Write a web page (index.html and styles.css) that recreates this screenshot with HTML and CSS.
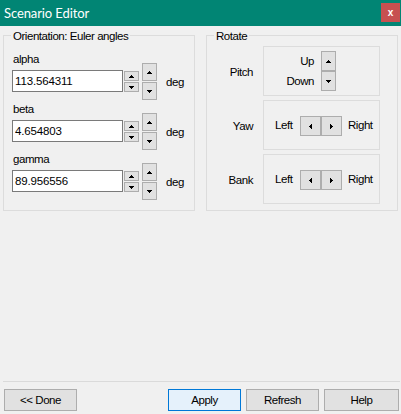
FILE: index.html
```html
<!DOCTYPE html>
<html>
<head>
<meta charset="utf-8">
<link rel="stylesheet" href="styles.css">
</head>
<body>
<div class="window">
  <div class="titlebar">
    <span class="title">Scenario Editor</span>
    <span class="close">x</span>
  </div>
  <div class="main">
    <div class="group">
      <span class="legend">Orientation: Euler angles</span>
      <div class="angle-row">
        <div class="field"><span class="field-label">alpha</span><input class="num" value="113.564311"></div>
        <div class="spin spin-small">
          <div class="sb"><svg width="5" height="3" shape-rendering="crispEdges"><path d="M2 0h1v1H2zM1 1h3v1H1zM0 2h5v1H0z"/></svg></div>
          <div class="sb"><svg width="5" height="3" shape-rendering="crispEdges"><path d="M0 0h5v1H0zM1 1h3v1H1zM2 2h1v1H2z"/></svg></div>
        </div>
        <div class="spin spin-large">
          <div class="sb"><svg width="5" height="3" shape-rendering="crispEdges"><path d="M2 0h1v1H2zM1 1h3v1H1zM0 2h5v1H0z"/></svg></div>
          <div class="sb"><svg width="5" height="3" shape-rendering="crispEdges"><path d="M0 0h5v1H0zM1 1h3v1H1zM2 2h1v1H2z"/></svg></div>
        </div>
        <span class="unit">deg</span>
      </div>
      <div class="angle-row">
        <div class="field"><span class="field-label">beta</span><input class="num" value="4.654803"></div>
        <div class="spin spin-small">
          <div class="sb"><svg width="5" height="3" shape-rendering="crispEdges"><path d="M2 0h1v1H2zM1 1h3v1H1zM0 2h5v1H0z"/></svg></div>
          <div class="sb"><svg width="5" height="3" shape-rendering="crispEdges"><path d="M0 0h5v1H0zM1 1h3v1H1zM2 2h1v1H2z"/></svg></div>
        </div>
        <div class="spin spin-large">
          <div class="sb"><svg width="5" height="3" shape-rendering="crispEdges"><path d="M2 0h1v1H2zM1 1h3v1H1zM0 2h5v1H0z"/></svg></div>
          <div class="sb"><svg width="5" height="3" shape-rendering="crispEdges"><path d="M0 0h5v1H0zM1 1h3v1H1zM2 2h1v1H2z"/></svg></div>
        </div>
        <span class="unit">deg</span>
      </div>
      <div class="angle-row">
        <div class="field"><span class="field-label">gamma</span><input class="num" value="89.956556"></div>
        <div class="spin spin-small">
          <div class="sb"><svg width="5" height="3" shape-rendering="crispEdges"><path d="M2 0h1v1H2zM1 1h3v1H1zM0 2h5v1H0z"/></svg></div>
          <div class="sb"><svg width="5" height="3" shape-rendering="crispEdges"><path d="M0 0h5v1H0zM1 1h3v1H1zM2 2h1v1H2z"/></svg></div>
        </div>
        <div class="spin spin-large">
          <div class="sb"><svg width="5" height="3" shape-rendering="crispEdges"><path d="M2 0h1v1H2zM1 1h3v1H1zM0 2h5v1H0z"/></svg></div>
          <div class="sb"><svg width="5" height="3" shape-rendering="crispEdges"><path d="M0 0h5v1H0zM1 1h3v1H1zM2 2h1v1H2z"/></svg></div>
        </div>
        <span class="unit">deg</span>
      </div>
    </div>

    <div class="group group-rotate">
      <span class="legend">Rotate</span>
      <div class="rot-row">
        <span class="rot-label">Pitch</span>
        <div class="rot-box pitch-box">
          <div class="ud-labels"><span>Up</span><span>Down</span></div>
          <div class="ud-spin">
            <div class="sb"><svg width="5" height="3" shape-rendering="crispEdges"><path d="M2 0h1v1H2zM1 1h3v1H1zM0 2h5v1H0z"/></svg></div>
            <div class="sb"><svg width="5" height="3" shape-rendering="crispEdges"><path d="M0 0h5v1H0zM1 1h3v1H1zM2 2h1v1H2z"/></svg></div>
          </div>
        </div>
      </div>
      <div class="rot-row">
        <span class="rot-label">Yaw</span>
        <div class="rot-box lr-box">
          <span class="lr-left">Left</span>
          <div class="sb lr-btn"><svg width="3" height="5" shape-rendering="crispEdges"><path d="M2 0h1v5H2zM1 1h1v3H1zM0 2h1v1H0z"/></svg></div>
          <div class="sb lr-btn"><svg width="3" height="5" shape-rendering="crispEdges"><path d="M0 0h1v5H0zM1 1h1v3H1zM2 2h1v1H2z"/></svg></div>
          <span class="lr-right">Right</span>
        </div>
      </div>
      <div class="rot-row">
        <span class="rot-label">Bank</span>
        <div class="rot-box lr-box">
          <span class="lr-left">Left</span>
          <div class="sb lr-btn"><svg width="3" height="5" shape-rendering="crispEdges"><path d="M2 0h1v5H2zM1 1h1v3H1zM0 2h1v1H0z"/></svg></div>
          <div class="sb lr-btn"><svg width="3" height="5" shape-rendering="crispEdges"><path d="M0 0h1v5H0zM1 1h1v3H1zM2 2h1v1H2z"/></svg></div>
          <span class="lr-right">Right</span>
        </div>
      </div>
    </div>
  </div>
  <div class="footer">
    <div class="btn">&lt;&lt; Done</div>
    <div class="btn btn-default">Apply</div>
    <div class="btn">Refresh</div>
    <div class="btn btn-help">Help</div>
  </div>
</div>
</body>
</html>
```

FILE: styles.css
```css
* { box-sizing: border-box; }

body {
  margin: 0;
  width: 401px;
  height: 414px;
  overflow: hidden;
  background: #f0f0f0;
  color: #000;
  font-family: "Liberation Sans", Arial, sans-serif;
  font-size: 11.5px;
  letter-spacing: -0.45px;
  line-height: 14px;
}

.window {
  display: flex;
  flex-direction: column;
  height: 414px;
}

.titlebar {
  flex: none;
  height: 26px;
  background: #018574;
  display: flex;
  justify-content: space-between;
  align-items: flex-start;
}

.title {
  font-family: Lato, "Open Sans", sans-serif;
  font-size: 13px;
  letter-spacing: -0.1px;
  color: #fff;
  line-height: 26px;
  padding-left: 4px;
}

.close {
  width: 19px;
  height: 19px;
  margin-top: 3px;
  margin-right: 1px;
  background: #c75050;
  color: #fff;
  font-family: "Liberation Sans", Arial, sans-serif;
  font-weight: bold;
  font-size: 10px;
  letter-spacing: 0;
  display: flex;
  align-items: center;
  justify-content: center;
}

.main {
  flex: 1;
  display: flex;
  gap: 11px;
  padding: 9px 0 0 3px;
}

.group {
  position: relative;
  width: 192px;
  height: 176px;
  border: 1px solid #dcdcdc;
  padding: 16px 0 0 8px;
}

.legend {
  position: absolute;
  top: -7px;
  left: 7px;
  padding: 0 2px;
  background: #f0f0f0;
  line-height: 15px;
}

.angle-row {
  display: flex;
  align-items: flex-start;
  height: 50px;
}

.field {
  display: flex;
  flex-direction: column;
  width: 111px;
}

.field-label {
  height: 14px;
  padding-left: 1px;
}

.num {
  width: 111px;
  height: 22px;
  margin: 4px 0 0;
  padding: 0 0 1px 2px;
  border: 1px solid #7a7a7a;
  background: #fff;
  font: inherit;
  letter-spacing: -0.15px;
  color: #000;
  outline: none;
}

.spin {
  display: flex;
  flex-direction: column;
  width: 15px;
}

.sb {
  background: #e1e1e1;
  border: 1px solid #adadad;
  display: flex;
  align-items: center;
  justify-content: center;
}

.sb svg { display: block; fill: #000; }

.spin-small {
  margin: 19px 0 0 1px;
  gap: 1px;
}
.spin-small .sb { height: 10px; }

.spin-large {
  margin: 11px 0 0 3px;
}
.spin-large .sb { height: 18px; }
.spin-large .sb + .sb { margin-top: 1px; }

.unit {
  margin: 23px 0 0 9px;
}

.group-rotate {
  padding: 10px 0 0 0;
}

.rot-row {
  display: flex;
  align-items: center;
  height: 50px;
  margin-bottom: 4px;
}

.rot-label {
  width: 46px;
  text-align: right;
  padding-top: 1px;
}

.rot-box {
  width: 117px;
  height: 50px;
  margin-left: 10px;
  border: 1px solid #dcdcdc;
  display: flex;
  align-items: flex-start;
}

.pitch-box {
  padding-top: 4px;
}

.ud-labels {
  width: 50px;
  display: flex;
  flex-direction: column;
  text-align: right;
}
.ud-labels span { line-height: 20px; }

.ud-spin {
  width: 15px;
  margin-left: 7px;
  display: flex;
  flex-direction: column;
}
.ud-spin .sb { height: 20px; }

.lr-box {
  padding: 15px 0 0 11px;
}

.lr-left {
  width: 25px;
  line-height: 18px;
}

.lr-btn {
  width: 21px;
  height: 20px;
}

.lr-right {
  margin-left: 6px;
  line-height: 18px;
}

.footer {
  flex: none;
  display: flex;
  margin: 0 1px 0 3px;
  padding: 7px 1px 3px 1px;
  border-top: 1px solid #dadada;
}

.btn {
  width: 73px;
  height: 22px;
  border: 1px solid #adadad;
  background: #e1e1e1;
  display: flex;
  align-items: center;
  justify-content: center;
}

.btn-default {
  background: #e5f1fb;
  border-color: #0078d7;
}

.btn + .btn { margin-left: 5px; }
.btn.btn-default { margin-left: auto; }
.btn-help { width: 75px; }
```
